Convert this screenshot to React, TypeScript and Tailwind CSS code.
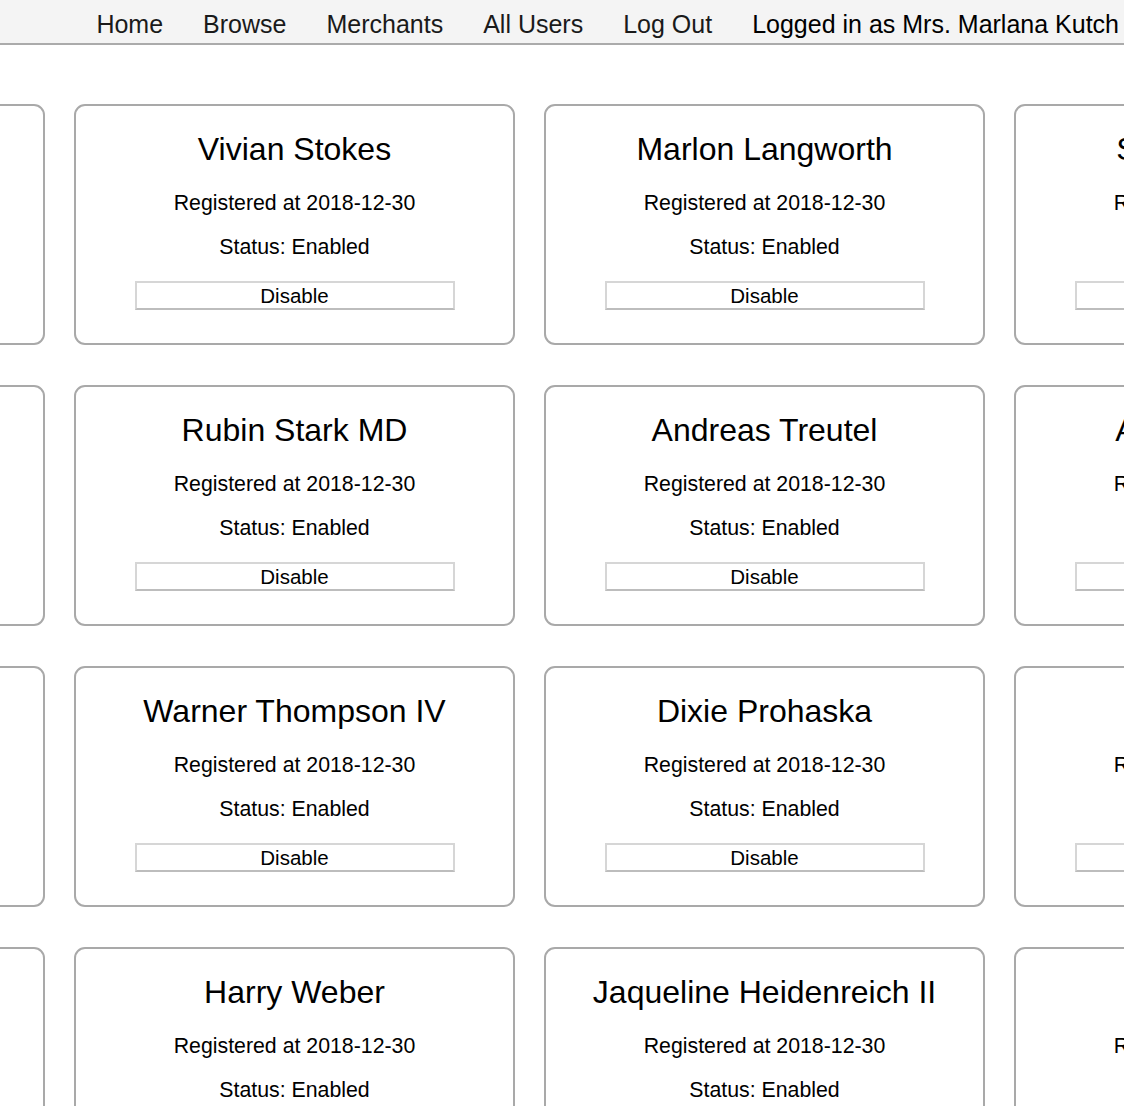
import React from 'react';

interface User {
  name: string;
  registered: string;
  status: string;
}

const rows: User[][] = [
  [
    { name: 'Kenyon Wisoky', registered: '2018-12-30', status: 'Enabled' },
    { name: 'Vivian Stokes', registered: '2018-12-30', status: 'Enabled' },
    { name: 'Marlon Langworth', registered: '2018-12-30', status: 'Enabled' },
    { name: 'Shanel Okuneva', registered: '2018-12-30', status: 'Enabled' },
  ],
  [
    { name: 'Deon Kirlin', registered: '2018-12-30', status: 'Enabled' },
    { name: 'Rubin Stark MD', registered: '2018-12-30', status: 'Enabled' },
    { name: 'Andreas Treutel', registered: '2018-12-30', status: 'Enabled' },
    { name: 'Antone Hagenes', registered: '2018-12-30', status: 'Enabled' },
  ],
  [
    { name: 'Leora Hane', registered: '2018-12-30', status: 'Enabled' },
    { name: 'Warner Thompson IV', registered: '2018-12-30', status: 'Enabled' },
    { name: 'Dixie Prohaska', registered: '2018-12-30', status: 'Enabled' },
    { name: 'Ola Bins', registered: '2018-12-30', status: 'Enabled' },
  ],
  [
    { name: 'Maida Feil', registered: '2018-12-30', status: 'Enabled' },
    { name: 'Harry Weber', registered: '2018-12-30', status: 'Enabled' },
    { name: 'Jaqueline Heidenreich II', registered: '2018-12-30', status: 'Enabled' },
    { name: 'Ike Lind', registered: '2018-12-30', status: 'Enabled' },
  ],
];

const navLinks = ['Home', 'Browse', 'Merchants', 'All Users', 'Log Out'];

function UserCard({ user }: { user: User }) {
  return (
    <div className="w-[441px] h-[241px] shrink-0 border-2 border-[#a9a9a9] rounded-[11px] bg-white flex flex-col items-center pt-[25px] text-black">
      <h2 className="text-[32px] leading-[36px] whitespace-nowrap">{user.name}</h2>
      <p className="mt-[24px] text-[21.3px] leading-[24px] whitespace-nowrap">Registered at {user.registered}</p>
      <p className="mt-[20px] text-[21.3px] leading-[24px] whitespace-nowrap">Status: {user.status}</p>
      <button className="mt-[22px] w-[320px] h-[29px] border-2 border-[#d6d6d6] border-b-[#bdbdbd] bg-white text-[20.5px] leading-[24px] text-black">
        Disable
      </button>
    </div>
  );
}

export default function App() {
  return (
    <div className="h-screen overflow-hidden bg-white" style={{ fontFamily: '"Liberation Sans", Arial, sans-serif' }}>
      {/* Barra de navegación */}
      <nav className="h-[45px] bg-[#f4f4f4] border-b-2 border-[#ababab] flex justify-end items-center gap-[40px] pr-[5px] pt-[6px] text-[25px]">
        {navLinks.map(link => (
          <a key={link} href="#" className="text-[#1a1a1a] font-light">
            {link}
          </a>
        ))}
        <span className="text-black">Logged in as Mrs. Marlana Kutch</span>
      </nav>

      {/* Tarjetas de usuarios */}
      <div className="ml-[-396px] mt-[59px] flex flex-col gap-[40px]">
        {rows.map((row, i) => (
          <div key={i} className="flex gap-[29px]">
            {row.map(user => (
              <UserCard key={user.name} user={user} />
            ))}
          </div>
        ))}
      </div>
    </div>
  );
}
